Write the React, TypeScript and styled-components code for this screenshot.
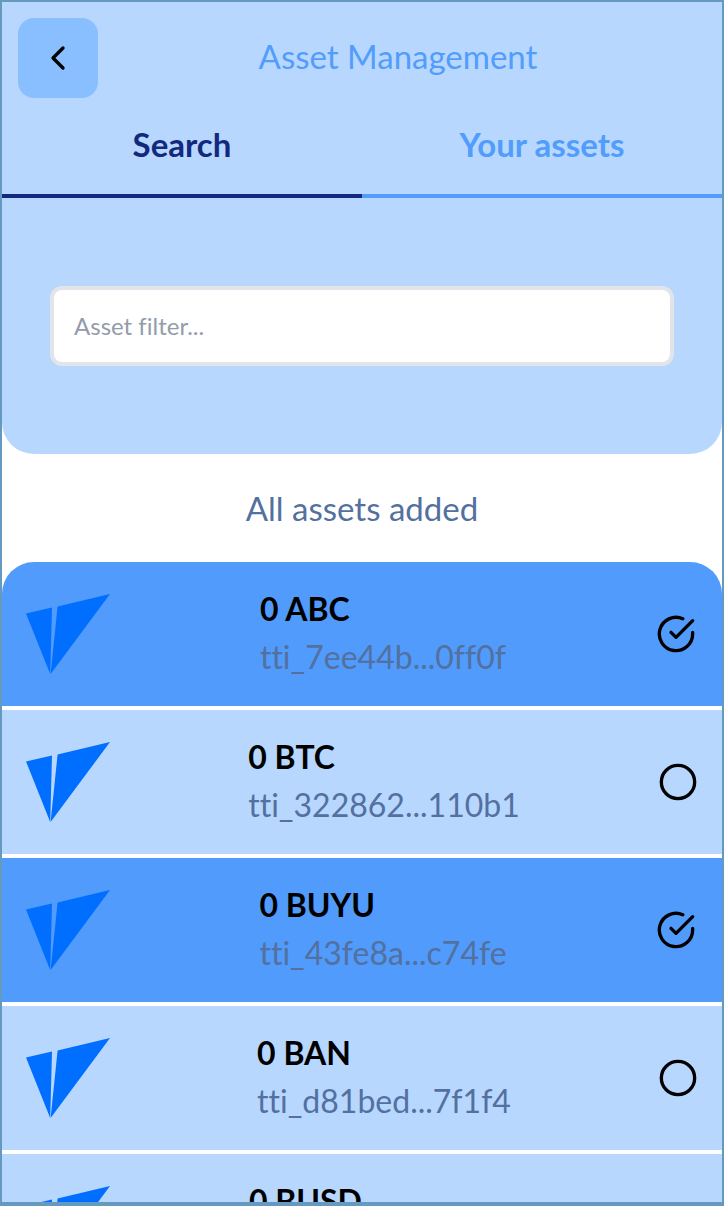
import React, { useState } from "react";
import styled, { createGlobalStyle } from "styled-components";

const GlobalStyle = createGlobalStyle`
  *, *::before, *::after { box-sizing: border-box; }
  body {
    margin: 0;
    background: #fff;
    font-family: Lato, "Open Sans", sans-serif;
    font-size: 33px;
    line-height: 48px;
    font-variant-ligatures: none;
    color: #000;
  }
  button, input { font: inherit; font-variant-ligatures: none; }
`;

const Screen = styled.main`
  display: flex;
  flex-direction: column;
  height: 100vh;
  border: 2px solid #6699bf;
  border-bottom-width: 4px;
  background: #fff;
  overflow: hidden;
`;

const TopPanel = styled.header`
  flex: none;
  background: #b7d7ff;
  border-radius: 0 0 32px 32px;
`;

const TitleBar = styled.div`
  display: flex;
  align-items: center;
  padding: 16px 24px 0 16px;
`;

const BackButton = styled.button`
  display: flex;
  align-items: center;
  justify-content: center;
  width: 80px;
  height: 80px;
  padding: 0;
  border: 0;
  border-radius: 16px;
  background: #89beff;
  color: #000;
  cursor: pointer;
`;

const Title = styled.h1`
  flex: 1;
  margin: 0;
  padding-bottom: 4px;
  font-size: 33px;
  font-weight: 400;
  text-align: center;
  color: #529dfb;
`;

const Tabs = styled.nav`
  display: flex;
`;

const Tab = styled.button<{ $active: boolean }>`
  flex: 1;
  padding: 22px 0 26px;
  border: 0;
  border-bottom: 4px solid ${(p) => (p.$active ? "#12297d" : "#529dfb")};
  background: none;
  color: ${(p) => (p.$active ? "#12297d" : "#529dfb")};
  font-weight: 700;
  cursor: pointer;
`;

const FilterArea = styled.div`
  padding: 88px 48px;
`;

const FilterInput = styled.input`
  display: block;
  width: 100%;
  height: 80px;
  padding: 0 20px 2px;
  border: 4px solid #e2e4e9;
  border-radius: 12px;
  background: #fff;
  font-size: 24px;
  line-height: 36px;
  outline: none;
  &::placeholder {
    color: #939cab;
    opacity: 1;
  }
`;

const Notice = styled.p`
  flex: none;
  margin: 0;
  padding: 30px 0;
  text-align: center;
  color: #53709f;
`;

const AssetList = styled.ul`
  display: flex;
  flex-direction: column;
  flex: 1;
  gap: 4px;
  min-height: 0;
  margin: 0;
  padding: 0;
  list-style: none;
  border-radius: 32px 32px 0 0;
  overflow: hidden;
`;

const AssetRow = styled.li<{ $added: boolean }>`
  display: flex;
  flex: none;
  align-items: center;
  justify-content: space-between;
  padding: 23px 24px;
  background: ${(p) => (p.$added ? "#509bfb" : "#b7d7ff")};
`;

const AssetText = styled.div`
  display: flex;
  flex-direction: column;
  padding-bottom: 2px;
  font-size: 32px;
`;

const Balance = styled.span`
  font-weight: 700;
`;

const TokenId = styled.span`
  color: #53709f;
`;

const Toggle = styled.label`
  position: relative;
  display: flex;
  cursor: pointer;
`;

const ToggleInput = styled.input`
  position: absolute;
  inset: 0;
  width: 100%;
  height: 100%;
  margin: 0;
  opacity: 0;
  cursor: pointer;
`;

const stroke = {
  fill: "none",
  stroke: "currentColor",
  strokeWidth: 2,
  strokeLinecap: "round" as const,
  strokeLinejoin: "round" as const,
};

const ChevronLeft = () => (
  <svg width="40" height="40" viewBox="0 0 24 24" aria-hidden="true" {...stroke}>
    <path d="M15 18l-6-6 6-6" />
  </svg>
);

const CheckedIcon = () => (
  <svg width="42" height="40" viewBox="0 0 25.2 24" aria-hidden="true" {...stroke}>
    <path d="M22 11.08V12a10 10 0 1 1-5.93-9.14" />
    <path d="M22 4 12 14.01l-3-3" />
  </svg>
);

const UncheckedIcon = () => (
  <svg width="40" height="40" viewBox="0 0 24 24" aria-hidden="true" {...stroke}>
    <circle cx="12" cy="12" r="10" />
  </svg>
);

const TokenLogo = () => (
  <svg width="84" height="80" viewBox="0 0 84 80" fill="#006eff" aria-hidden="true">
    <path d="M0 19.4 26 13.6 24.2 80Z" />
    <path d="M31.6 12.4 84 0 24.6 80Z" />
  </svg>
);

const initialAssets = [
  { symbol: "ABC", id: "tti_7ee44b...0ff0f", added: true },
  { symbol: "BTC", id: "tti_322862...110b1", added: false },
  { symbol: "BUYU", id: "tti_43fe8a...c74fe", added: true },
  { symbol: "BAN", id: "tti_d81bed...7f1f4", added: false },
  { symbol: "BUSD", id: "tti_5d8d50...b8604", added: false },
];

const tabs = ["Search", "Your assets"];

export default function App() {
  const [activeTab, setActiveTab] = useState("Search");
  const [assets, setAssets] = useState(initialAssets);

  const toggle = (symbol: string) =>
    setAssets((list) =>
      list.map((a) => (a.symbol === symbol ? { ...a, added: !a.added } : a))
    );

  return (
    <>
      <GlobalStyle />
      <Screen>
        <TopPanel>
          <TitleBar>
            <BackButton type="button" aria-label="Back">
              <ChevronLeft />
            </BackButton>
            <Title>Asset Management</Title>
          </TitleBar>
          <Tabs>
            {tabs.map((name) => (
              <Tab
                key={name}
                type="button"
                $active={name === activeTab}
                onClick={() => setActiveTab(name)}
              >
                {name}
              </Tab>
            ))}
          </Tabs>
          <FilterArea>
            <FilterInput type="text" aria-label="Asset filter" placeholder="Asset filter..." />
          </FilterArea>
        </TopPanel>
        <Notice>All assets added</Notice>
        <AssetList>
          {assets.map((a) => (
            <AssetRow key={a.symbol} $added={a.added}>
              <TokenLogo />
              <AssetText>
                <Balance>0 {a.symbol}</Balance>
                <TokenId>{a.id}</TokenId>
              </AssetText>
              <Toggle>
                <ToggleInput
                  type="checkbox"
                  aria-label={a.symbol}
                  checked={a.added}
                  onChange={() => toggle(a.symbol)}
                />
                {a.added ? <CheckedIcon /> : <UncheckedIcon />}
              </Toggle>
            </AssetRow>
          ))}
        </AssetList>
      </Screen>
    </>
  );
}
